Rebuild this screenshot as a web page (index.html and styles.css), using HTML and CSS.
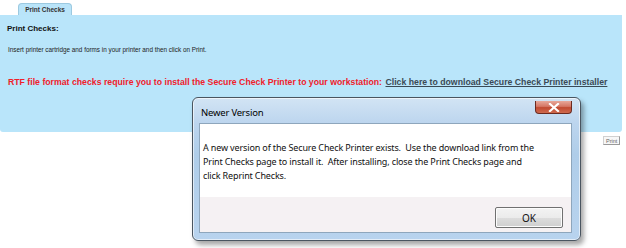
FILE: index.html
```html
<!DOCTYPE html>
<html>
<head>
<meta charset="utf-8">
<link rel="stylesheet" href="styles.css">
</head>
<body>
<div class="page">
  <div class="tabs"><div class="tab">Print Checks</div></div>
  <div class="panel">
    <div class="heading">Print Checks:</div>
    <div class="insert">Insert printer cartridge and forms in your printer and then click on Print.</div>
    <div class="notice"><span class="warn">RTF file format checks require you to install the Secure Check Printer to your workstation:</span> <a class="dl" href="#">Click here to download Secure Check Printer installer</a></div>
  </div>
  <div class="actions"><button class="print">Print</button></div>
</div>
<div class="dialog">
  <div class="titlebar">
    <span class="title">Newer Version</span>
    <span class="close"><svg width="12" height="9" viewBox="0 0 12 9"><path d="M2 1 L10 8 M10 1 L2 8" stroke="#fff" stroke-width="2.2" stroke-linecap="square"/></svg></span>
  </div>
  <div class="client">
    <div class="msg">A new version of the Secure Check Printer exists.&nbsp; Use the download link from the<br>Print Checks page to install it.&nbsp; After installing, close the Print Checks page and<br>click Reprint Checks.</div>
    <div class="btnbar"><button class="ok">OK</button></div>
  </div>
</div>
</body>
</html>
```
FILE: styles.css
```css
html, body { margin: 0; padding: 0; background: #fff; }
body { width: 626px; height: 248px; overflow: hidden; position: relative; font-family: "Liberation Sans", Arial, sans-serif; }
.page { padding-top: 3px; }
.tabs { height: 12px; padding-left: 18px; }
.tab {
  width: 54px; height: 12px; box-sizing: border-box;
  background: #b9e4f9; border: 1px solid #9cc9e0; border-bottom: none;
  border-radius: 4px 4px 0 0;
  font-size: 6.5px; font-weight: bold; color: #333;
  text-align: center; line-height: 12px;
}
.panel {
  background: #b9e5fa; height: 117px; margin-right: 4px;
  padding: 9px 7px 0 7px; box-sizing: border-box;
  border-radius: 0 0 3px 3px;
}
.heading { font-size: 8px; font-weight: bold; color: #111; }
.insert { font-size: 6.35px; color: #222; margin-top: 13px; margin-left: 1px; }
.notice { margin-top: 24px; margin-left: 1px; font-size: 8.72px; font-weight: bold; white-space: nowrap; }
.warn { color: #f0202a; }
.dl { color: #3b4a55; text-decoration: underline; margin-left: 1px; }
.actions { display: flex; justify-content: flex-end; padding: 4px 6px 0 0; }
.print {
  font-family: "Liberation Sans", Arial, sans-serif; font-size: 5.5px; color: #666;
  background: #f7f7f7; border: 1px solid #d0d0d0; border-right-color: #999; border-bottom-color: #999;
  padding: 1px 2px; height: 9px; line-height: 6px; width: 17px;
}
.dialog {
  position: absolute; left: 192px; top: 97px; width: 389px; height: 144px;
  box-sizing: border-box; border: 1px solid #4a5560; border-radius: 6px;
  background: linear-gradient(180deg, #d2e4f4 0%, #bcd5ee 18%, #afcde9 40%, #b8d3ee 100%);
  box-shadow: 3px 4px 5px rgba(0,0,0,0.35), inset 0 0 0 1px rgba(255,255,255,0.6);
  padding: 0 8px 7px 6px;
  display: flex; flex-direction: column;
}
.titlebar { height: 25px; display: flex; align-items: flex-start; justify-content: space-between; }
.title { font-family: "Noto Sans", "Open Sans", sans-serif; font-size: 9.5px; color: #000; margin-top: 8px; margin-left: 2px; letter-spacing: -0.2px; }
.close {
  width: 37px; height: 13px; margin-top: 3px; margin-right: 0;
  border: 1px solid #6b2a20; border-top: none; border-radius: 0 0 4px 4px; box-sizing: border-box;
  background: linear-gradient(180deg, #e8a89a 0%, #d57765 45%, #c14a32 55%, #cf6a4e 100%);
  display: flex; align-items: center; justify-content: center;
}
.client {
  flex: 1; background: #fff; border: 1px solid #8ea6bc;
  display: flex; flex-direction: column;
}
.msg {
  font-family: "Noto Sans", "Open Sans", sans-serif; font-size: 9px; letter-spacing: -0.14px; word-spacing: 0;
  color: #111; line-height: 14px; padding: 17px 0 0 3px; flex: 1; white-space: nowrap;
}
.btnbar { height: 35px; background: #f5f1f3; display: flex; justify-content: flex-end; align-items: flex-start; padding: 10px 8px 0 0; box-sizing: border-box; }
.ok {
  width: 68px; height: 21px; box-sizing: border-box;
  border: 1px solid #707070; border-radius: 2px;
  background: linear-gradient(180deg, #f3f3f3 0%, #ebebeb 50%, #dddddd 51%, #cfcfcf 100%);
  box-shadow: inset 0 0 0 1px #fcfcfc;
  font-family: "Noto Sans", "Open Sans", sans-serif; font-size: 10px; color: #111; padding: 0;
}
```
